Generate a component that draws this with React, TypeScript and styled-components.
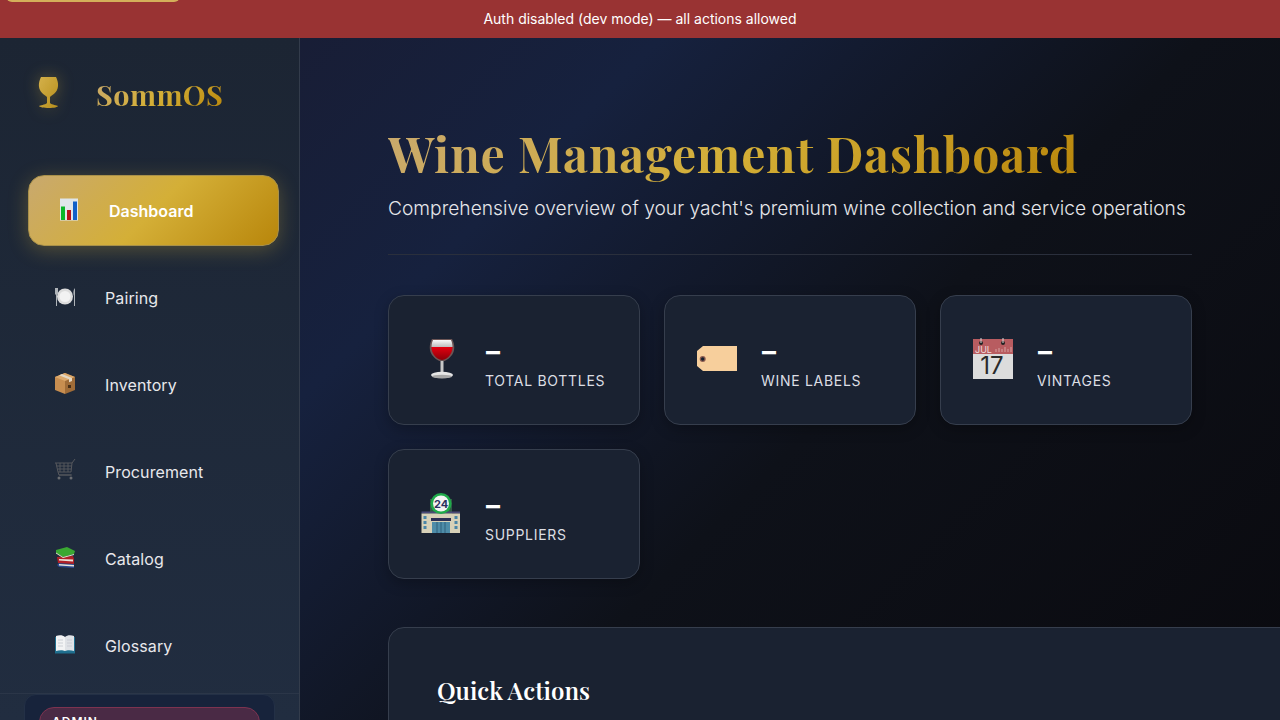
import React from 'react';
import styled, { createGlobalStyle } from 'styled-components';

const Global = createGlobalStyle`
  html, body { margin: 0; padding: 0; height: 100%; overflow: hidden; background: #0a0a0f; }
  * { box-sizing: border-box; }
  #root { height: 720px; overflow: hidden; }
`;
const goldText = `background:linear-gradient(135deg,#c9a96e 0%,#d4af37 50%,#b8860b 100%);-webkit-background-clip:text;background-clip:text;color:transparent;`;
const Page = styled.div`display:flex;flex-direction:column;height:720px;font-family:Inter,sans-serif;color:#fff;position:relative;overflow:hidden;background:linear-gradient(135deg,#1a1a2e 0%,#16213e 35%,#0e1119 62%,#0a0a0f 100%);`;
const TopTab = styled.div`position:absolute;left:6px;top:-4px;width:174px;height:6px;border-radius:0 0 8px 8px;background:#d4af5a;z-index:3;`;
const Banner = styled.div`height:38px;flex:none;background:#993333;display:flex;align-items:center;justify-content:center;font-size:14px;color:#fff;padding-bottom:1px;`;
const Body = styled.div`flex:1;display:flex;min-height:0;`;
const Side = styled.aside`width:300px;flex:none;background:linear-gradient(180deg,#1c2533,#212d40);border-right:1px solid #333c4b;display:flex;flex-direction:column;`;
const Brand = styled.div`height:113px;padding:0 0 0 31px;display:flex;align-items:center;gap:30px;flex:none;`;
const LogoWrap = styled.div`width:35px;height:40px;display:flex;align-items:center;justify-content:center;filter:drop-shadow(0 0 8px rgba(212,175,55,.35));margin-top:-4px;`;
const BrandName = styled.div`font-family:"Playfair Display","Liberation Serif",serif;font-size:28.8px;letter-spacing:.45px;font-weight:700;margin-top:-2px;${goldText}`;
const Nav = styled.nav`display:flex;flex-direction:column;padding:24px 20px 0 28px;gap:16px;flex:1;`;
const NavItem = styled.div<{ $active?: boolean }>`height:71px;border-radius:16px;display:flex;align-items:center;font-size:16px;letter-spacing:.1px;font-weight:${p => p.$active ? 600 : 400};color:#e8e8ec;padding-left:${p => p.$active ? 29 : 25}px;gap:${p => p.$active ? 27 : 28}px;
${p => p.$active ? 'background:linear-gradient(135deg,#c9a96e,#d4af37 50%,#b8860b);border:1px solid #a8904a;box-shadow:0 4px 20px rgba(212,175,55,.3);color:#fff;letter-spacing:0;' : ''}`;
const NavIcon = styled.svg`width:24px;height:24px;flex:none;display:block;margin-top:-3px;`;
const Foot = styled.div`height:27px;flex:none;border-top:1px solid #2b3648;padding:0 24px;`;
const FootCard = styled.div`height:40px;border-radius:12px 12px 0 0;background:#17233b;border:1px solid #233046;padding:12px 14px 0;`;
const RolePill = styled.div`height:30px;border-radius:20px;background:#4a2a45;border:1px solid #7d3350;padding:6px 12px;font-size:12px;font-weight:600;letter-spacing:1px;color:#fff;`;
const Main = styled.main`flex:1;padding:87px 88px 0;min-width:0;overflow:hidden;`;
const H1 = styled.h1`margin:0;font-family:"Playfair Display","Liberation Serif",serif;font-size:48px;line-height:58px;letter-spacing:.96px;font-weight:700;white-space:nowrap;margin-top:-1px;display:inline-block;${goldText}`;
const Sub = styled.p`margin:12px 0 0;font-size:19.2px;line-height:28px;font-weight:300;color:#e6e6ea;white-space:nowrap;`;
const Rule = styled.div`height:1px;background:#2a2f3c;margin:32px 0 40px;`;
const Grid = styled.div`display:grid;grid-template-columns:repeat(3,252px);gap:24px;`;
const Card = styled.div`height:130px;border-radius:16px;background:#1a2231;border:1px solid #363e4d;box-shadow:0 4px 14px rgba(0,0,0,.25);display:flex;align-items:center;padding-left:29px;gap:23px;`;
const CardSvg = styled.svg`width:44px;height:44px;flex:none;display:block;margin-top:-2px;`;
const Val = styled.div`font-size:28px;line-height:34px;font-weight:700;margin:3px 0 4px 1px;`;
const Lab = styled.div`font-size:14px;letter-spacing:.7px;color:#dcdee4;line-height:18px;`;
const Quick = styled.section`margin-top:48px;width:1000px;height:200px;border-radius:16px;background:#1a2231;border:1px solid #363e4d;padding:44px 48px;`;
const QuickTitle = styled.h2`margin:0;font-family:"Playfair Display","Liberation Serif",serif;font-size:24px;line-height:36px;font-weight:600;`;

const IconChart = () => <NavIcon viewBox="0 0 24 24"><rect x="2" y="1.500" width="18" height="22" fill="#dfe6ea"/><rect x="3" y="9.500" width="4" height="13.500" fill="#0ab52a"/><rect x="9" y="13" width="4" height="10" fill="#b8101a"/><rect x="15" y="4.500" width="4" height="18.500" fill="#1160c8"/></NavIcon>;
const IconPlate = () => <NavIcon viewBox="0 0 24 24"><circle cx="12" cy="12.500" r="8" fill="#dcdcdc"/><circle cx="12" cy="12.500" r="5.500" fill="#f2f2f2"/><path d="M2 4v6l1 1v11h1V11l1-1V4M22 4c-2 2-2 6-1 8v10h1z" fill="#aeb3b8"/></NavIcon>;
const IconBox = () => <NavIcon viewBox="0 0 24 24"><path d="M12 2 2 6v13l10 4z" fill="#c88e50"/><path d="M12 2l10 4v13l-10 4z" fill="#a06c38"/><path d="M2 6l10 4 10-4-10-4z" fill="#dca96c"/><path d="M6 4.200l10 4v3l3-1.200V7L9 3z" fill="#e4d8c4"/><rect x="15" y="14" width="3" height="3" fill="#4a3018"/></NavIcon>;
const IconCart = () => <NavIcon viewBox="0 0 24 24"><path d="M2 5h17l3-4M3 5l2 9h13l1-9M3.500 8h15.500M4.500 11h14M7 5v9M11 5v9M15 5v9M5 14l1 3h13M6 17h12" fill="none" stroke="#55575c" strokeWidth="1"/><circle cx="6" cy="20" r="1.500" fill="#6a6c70"/><circle cx="18" cy="20" r="1.500" fill="#6a6c70"/></NavIcon>;
const IconBooks = () => <NavIcon viewBox="0 0 24 24"><path d="M4 20l2-2 15 1v4l-15-1z" fill="#2a4a90"/><path d="M6 19l15 1v1.500L6 20.500z" fill="#e8e4da"/><path d="M4 12l16-1 1 3v5L5 18z" fill="#b02028"/><path d="M6 14l14 .5v2L6 15.500z" fill="#e8e4da"/><path d="M3 5 14 2l8 4-1 3-11 3-7-4z" fill="#3aa832"/><path d="M3 7.500l7 4.500 11-3v1l-11 3-7-4.500z" fill="#dfe0d0"/></NavIcon>;
const IconBook = () => <NavIcon viewBox="0 0 24 24"><path d="M2 5h20v16.500H2z" fill="#1f6f8f"/><path d="M3 4c3-1 7-1 9 1v14c-2-1-6-1-9 0z" fill="#f2f3f4"/><path d="M21 4c-3-1-7-1-9 1v14c2-1 6-1 9 0z" fill="#dfe2e6"/><path d="M5 8h5M5 11h5M5 14h5M14 8h5M14 11h5M14 14h5" stroke="#c4c8cf" strokeWidth=".8"/></NavIcon>;
const GlassLogo = () => <svg width="21" height="31" viewBox="0 0 21 31"><defs><linearGradient id="lg" x1="0" y1="0" x2="1" y2="1"><stop offset="0" stopColor="#d4b04a"/><stop offset="1" stopColor="#b8901c"/></linearGradient></defs><path d="M3 0h15c2 4 3 9 1 13-1 3-5 5-7 7v6c2 2 7 2 8 3 0 1-4 2-9 2s-10-1-10-2c1-1 6-1 8-3v-6c-2-2-6-4-7-7C0 9 1 4 3 0z" fill="url(#lg)"/></svg>;
const WineGlass = () => <CardSvg viewBox="0 0 44 44"><defs><linearGradient id="wg" x1="0" y1="0" x2="0" y2="1"><stop offset="0" stopColor="#e40010"/><stop offset="1" stopColor="#8a0008"/></linearGradient><linearGradient id="wb" x1="0" y1="0" x2="0" y2="1"><stop offset="0" stopColor="#fafafa"/><stop offset="1" stopColor="#bdbdbd"/></linearGradient></defs><g transform="translate(2 0)"><path d="M12 2h20c3 5 3 12 0 16-3 4-6 5-7 6h-6c-1-1-4-2-7-6C9 14 9 7 12 2z" fill="#6b5555"/><path d="M13 3h18c1 2 1.500 5 1.500 7h-21C11.500 8 12 5 13 3z" fill="url(#wb)"/><path d="M11.500 10h21c0 3-1 6-2.500 8-2 3-5 4.500-8 5-3-.5-6-2-8-5-1.500-2-2.500-5-2.500-8z" fill="url(#wg)"/><rect x="20.500" y="24" width="3" height="11" fill="#c8c8c8"/><ellipse cx="22" cy="38" rx="11" ry="3.300" fill="#e6e6e6"/><ellipse cx="22" cy="39.500" rx="10" ry="1.800" fill="#a8a8a8"/></g></CardSvg>;
const Tag = () => <CardSvg viewBox="0 0 44 44"><path d="M9 9h34v25H9L3 29V14z" fill="#f7cf9c"/><circle cx="8.700" cy="22" r="3" fill="#8c5c50"/><circle cx="8.700" cy="22" r="1.700" fill="#14202e"/></CardSvg>;
const Calendar = () => <CardSvg viewBox="0 0 44 44"><rect x="3" y="2" width="40" height="40" fill="#dcdcdc"/><rect x="3" y="2" width="40" height="15" fill="#b85c60"/><circle cx="11" cy="6" r="2" fill="#222"/><circle cx="33" cy="6" r="2" fill="#222"/><path d="M11 6V1M33 6V1" stroke="#ddd" strokeWidth="1"/><text x="5" y="15.500" fontFamily="Inter,sans-serif" fontSize="9" fill="#f0dcdc">JUL</text><path d="M26 15v-3M29 15v-4M32 15v-3M35 15v-5M38 15v-3M41 15v-5" stroke="#cc8a8c" strokeWidth="1.500"/><text x="22" y="37" textAnchor="middle" fontFamily="Inter,sans-serif" fontSize="24" fill="#2a2a2a">17</text></CardSvg>;
const Store = () => <CardSvg viewBox="0 0 44 44"><rect x="12" y="8" width="22" height="15" fill="#2f5d45"/><rect x="3.500" y="20.500" width="38.500" height="2" fill="#4a4a78"/><rect x="3.500" y="22.500" width="38.500" height="19.500" fill="#d7d1b8"/><rect x="5.500" y="25" width="3" height="3" fill="#4a86a8"/><rect x="5.500" y="30" width="3" height="3" fill="#4a86a8"/><rect x="5.500" y="35" width="3" height="3" fill="#4a86a8"/><rect x="36.500" y="25" width="3" height="3" fill="#4a86a8"/><rect x="36.500" y="30" width="3" height="3" fill="#4a86a8"/><rect x="36.500" y="35" width="3" height="3" fill="#4a86a8"/><rect x="13" y="27" width="20" height="3" fill="#2b2f55"/><rect x="14" y="31" width="18" height="11" fill="#4e8ca8"/><path d="M19 31v11M23 31v11M27 31v11" stroke="#2f607c" strokeWidth="1"/><circle cx="23" cy="12.500" r="10.500" fill="#1faa4a"/><circle cx="23" cy="12.500" r="8" fill="#f4f4f4"/><text x="23" y="16.500" textAnchor="middle" fontFamily="Inter,sans-serif" fontSize="11" fontWeight="700" fill="#2a3060">24</text></CardSvg>;

const nav: [React.ReactNode, string][] = [[<IconChart/>,'Dashboard'],[<IconPlate/>,'Pairing'],[<IconBox/>,'Inventory'],[<IconCart/>,'Procurement'],[<IconBooks/>,'Catalog'],[<IconBook/>,'Glossary']];
const stats: [React.ReactNode, string][] = [[<WineGlass/>,'TOTAL BOTTLES'],[<Tag/>,'WINE LABELS'],[<Calendar/>,'VINTAGES'],[<Store/>,'SUPPLIERS']];
export default function App(){return <Page><Global/><TopTab/><Banner>Auth disabled (dev mode) — all actions allowed</Banner><Body><Side><Brand><LogoWrap><GlassLogo/></LogoWrap><BrandName>SommOS</BrandName></Brand><Nav>{nav.map((n,i)=><NavItem key={n[1]} $active={i===0}>{n[0]}{n[1]}</NavItem>)}</Nav><Foot><FootCard><RolePill>ADMIN</RolePill></FootCard></Foot></Side><Main><H1>Wine Management Dashboard</H1><Sub>Comprehensive overview of your yacht's premium wine collection and service operations</Sub><Rule/><Grid>{stats.map(s=><Card key={s[1]}>{s[0]}<div><Val>–</Val><Lab>{s[1]}</Lab></div></Card>)}</Grid><Quick><QuickTitle>Quick Actions</QuickTitle></Quick></Main></Body></Page>;}
